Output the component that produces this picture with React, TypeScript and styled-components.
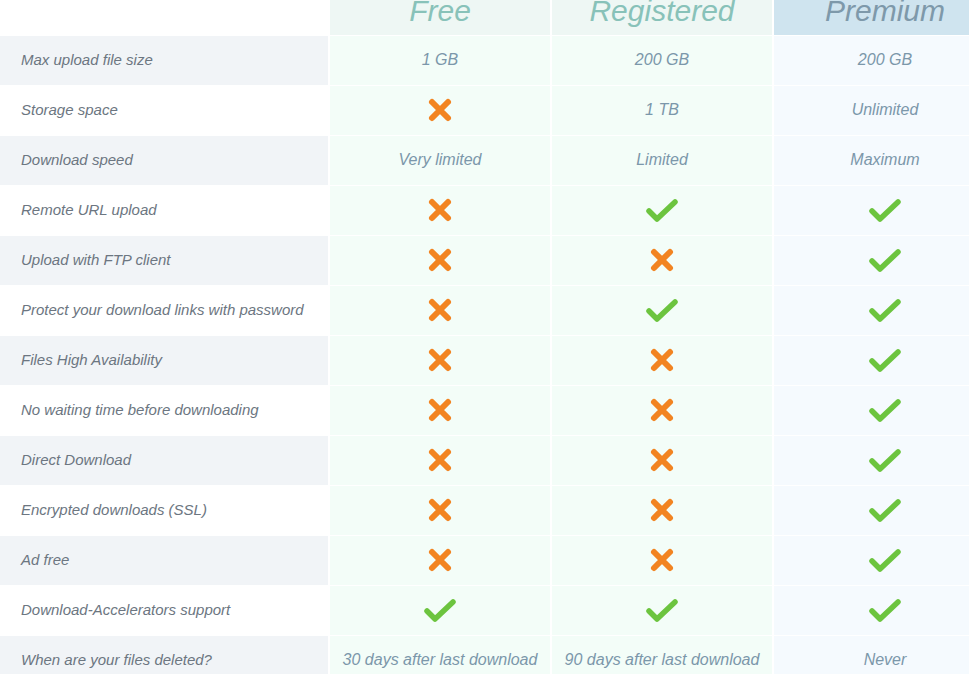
import { FC } from "react";
import styled, { createGlobalStyle } from "styled-components";

type Plan = "free" | "registered" | "premium";
type Value = boolean | string;

const PLANS: { key: Plan; title: string }[] = [
  { key: "free", title: "Free" },
  { key: "registered", title: "Registered" },
  { key: "premium", title: "Premium" },
];

const FEATURES: { label: string; values: [Value, Value, Value] }[] = [
  { label: "Max upload file size", values: ["1 GB", "200 GB", "200 GB"] },
  { label: "Storage space", values: [false, "1 TB", "Unlimited"] },
  { label: "Download speed", values: ["Very limited", "Limited", "Maximum"] },
  { label: "Remote URL upload", values: [false, true, true] },
  { label: "Upload with FTP client", values: [false, false, true] },
  { label: "Protect your download links with password", values: [false, true, true] },
  { label: "Files High Availability", values: [false, false, true] },
  { label: "No waiting time before downloading", values: [false, false, true] },
  { label: "Direct Download", values: [false, false, true] },
  { label: "Encrypted downloads (SSL)", values: [false, false, true] },
  { label: "Ad free", values: [false, false, true] },
  { label: "Download-Accelerators support", values: [true, true, true] },
  {
    label: "When are your files deleted?",
    values: ["30 days after last download", "90 days after last download", "Never"],
  },
];

const GlobalStyle = createGlobalStyle`
  html, body {
    margin: 0;
    padding: 0;
    background: #ffffff;
    overflow: hidden;
  }
  body {
    font-family: "Liberation Sans", Arial, sans-serif;
  }
`;

const Cross: FC = () => (
  <svg width="26" height="26" viewBox="0 0 26 26">
    <path
      d="M5 5 L21 21 M21 5 L5 21"
      stroke="#f28421"
      strokeWidth="6"
      strokeLinecap="round"
      fill="none"
    />
  </svg>
);

const Check: FC = () => (
  <svg width="34" height="26" viewBox="0 0 34 26">
    <path
      d="M4 14 L12 22 L30 5"
      stroke="#6cc43f"
      strokeWidth="5.5"
      strokeLinecap="round"
      strokeLinejoin="round"
      fill="none"
    />
  </svg>
);

const App: FC = () => {
  return (
    <>
      <GlobalStyle />
      <Table>
        <Corner />
        {PLANS.map((p) => (
          <Head key={p.key} plan={p.key}>
            <HeadText plan={p.key}>{p.title}</HeadText>
          </Head>
        ))}
        {FEATURES.map((f, i) => (
          <Row key={f.label}>
            <Label striped={i % 2 === 0}>{f.label}</Label>
            {f.values.map((v, j) => (
              <Cell key={j} plan={PLANS[j].key}>
                {v === true && <Check />}
                {v === false && <Cross />}
                {typeof v === "string" && v}
              </Cell>
            ))}
          </Row>
        ))}
      </Table>
    </>
  );
};

export default App;

const Table = styled.div`
  display: grid;
  grid-template-columns: 328px 220px 220px 222px;
  grid-auto-rows: 49px;
  grid-template-rows: 35px;
  column-gap: 2px;
  row-gap: 1px;
  width: 996px;
`;

const Row = styled.div`
  display: contents;
`;

const Corner = styled.div`
  background: #ffffff;
`;

const Head = styled.div<{ plan: Plan }>`
  display: flex;
  justify-content: center;
  align-items: flex-start;
  overflow: hidden;
  background: ${(p) => (p.plan === "premium" ? "#cfe4ef" : "#eef7f4")};
`;

const HeadText = styled.span<{ plan: Plan }>`
  font-size: 30px;
  line-height: 30px;
  font-style: italic;
  margin-top: -4px;
  color: ${(p) => (p.plan === "premium" ? "#7e99aa" : "#88c2b9")};
`;

const Label = styled.div<{ striped: boolean }>`
  display: flex;
  align-items: center;
  padding: 0 0 2px 21px;
  font-size: 15px;
  font-style: italic;
  color: #6c7681;
  background: ${(p) => (p.striped ? "#f1f4f7" : "#ffffff")};
`;

const Cell = styled.div<{ plan: Plan }>`
  display: flex;
  align-items: center;
  justify-content: center;
  padding-bottom: 1px;
  font-size: 16px;
  font-style: italic;
  color: #7b97aa;
  background: ${(p) => (p.plan === "premium" ? "#f5fafe" : "#f3fdf8")};
`;
